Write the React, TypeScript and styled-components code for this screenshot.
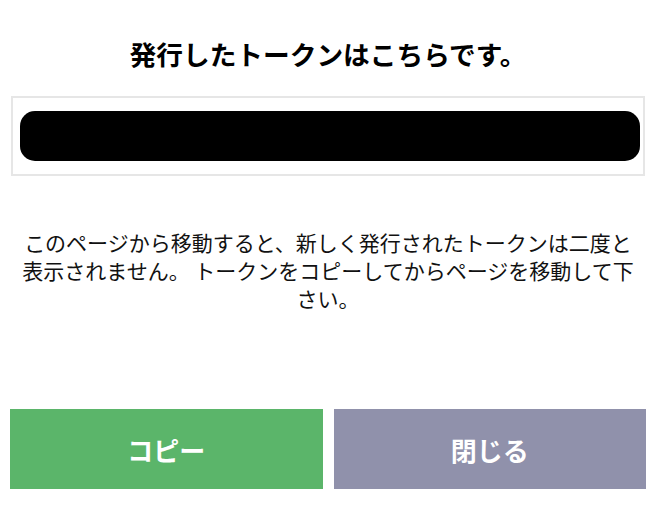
import React from "react";
import styled, { createGlobalStyle } from "styled-components";

const GlobalStyle = createGlobalStyle`
  html, body {
    margin: 0;
    padding: 0;
    background: #ffffff;
  }
  body {
    font-family: "Noto Sans CJK JP", "Noto Sans", sans-serif;
    color: #000000;
  }
`;

const Page = styled.div`
  width: 664px;
  height: 508px;
  box-sizing: border-box;
  padding: 35px 18px 0 10px;
  display: flex;
  flex-direction: column;
`;

const Title = styled.h1`
  margin: 0;
  font-size: 26.7px;
  line-height: 37px;
  font-weight: 700;
  text-align: center;
  color: #000000;
`;

const TokenBox = styled.div`
  margin: 24px 1px 0 1px;
  border: 2px solid #e6e6e6;
  padding: 13px 3px 13px 7px;
`;

const TokenMask = styled.div`
  height: 50px;
  border-radius: 15px;
  background: #000000;
`;

const Notice = styled.p`
  margin: 52px 0 0 0;
  padding: 0 8px;
  font-size: 21px;
  line-height: 28px;
  font-weight: 400;
  text-align: center;
  color: #111111;
`;

const ButtonRow = styled.div`
  margin-top: 97px;
  display: grid;
  grid-template-columns: 1fr 1fr;
  gap: 11px;
`;

const ActionButton = styled.button<{ $tone: "copy" | "close" }>`
  height: 80px;
  border: none;
  border-radius: 0;
  margin: 0;
  padding: 0;
  background: ${(p) => (p.$tone === "copy" ? "#5bb56a" : "#9091ab")};
  color: #ffffff;
  font-family: "Noto Sans CJK JP", "Noto Sans", sans-serif;
  font-size: 26px;
  font-weight: 700;
  cursor: pointer;
`;

export default function App() {
  return (
    <>
      <GlobalStyle />
      <Page>
        <Title>発行したトークンはこちらです。</Title>
        <TokenBox>
          <TokenMask />
        </TokenBox>
        <Notice>
          このページから移動すると、新しく発行されたトークンは二度と表示されません。 トークンをコピーしてからページを移動して下さい。
        </Notice>
        <ButtonRow>
          <ActionButton $tone="copy">コピー</ActionButton>
          <ActionButton $tone="close">閉じる</ActionButton>
        </ButtonRow>
      </Page>
    </>
  );
}
